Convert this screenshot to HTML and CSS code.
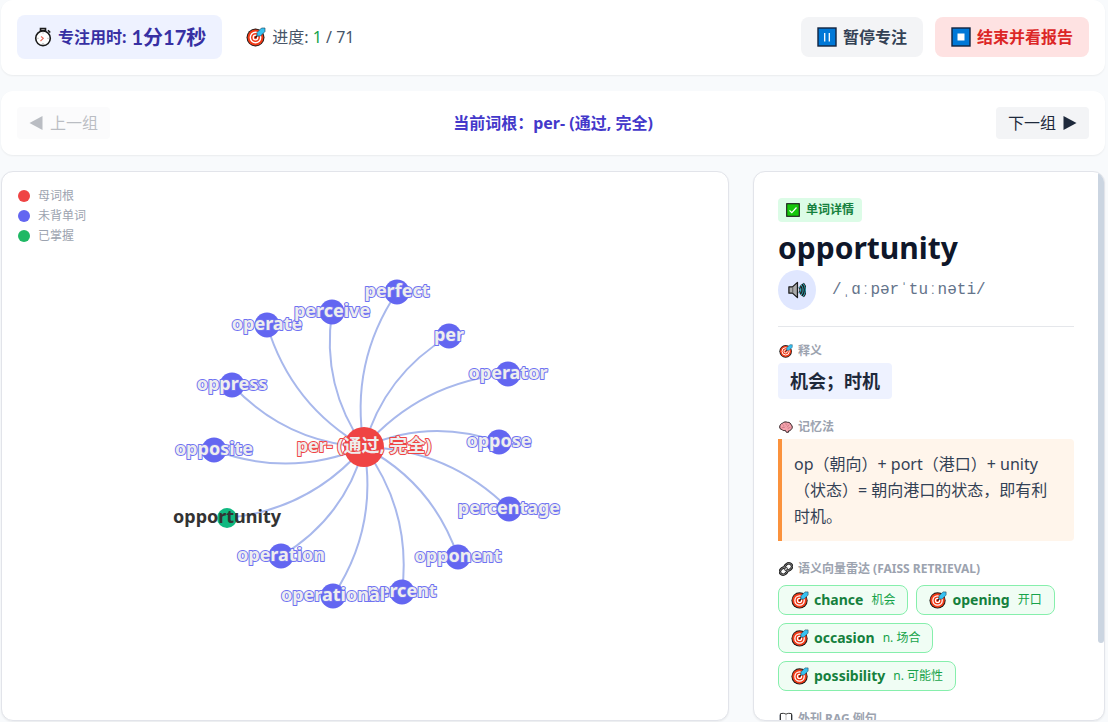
FILE: index.html
```html
<!DOCTYPE html>
<html lang="zh-CN">
<head>
    <meta charset="UTF-8">
    <meta name="viewport" content="width=device-width, initial-scale=1.0">
    <title>词根专注学习</title>
    <link rel="stylesheet" href="styles.css">
</head>
<body>
    <!-- 图标 -->
    <svg class="sprite" aria-hidden="true">
        <symbol id="icon-target" viewBox="0 0 20 20">
            <circle cx="9.5" cy="10.5" r="9" fill="#1b1b1b"/>
            <circle cx="9.5" cy="10.5" r="8" fill="#f03a17"/>
            <circle cx="9.5" cy="10.5" r="5.2" fill="none" stroke="#fff" stroke-width="1.4"/>
            <circle cx="9.5" cy="10.5" r="2.3" fill="none" stroke="#fff" stroke-width="1.3"/>
            <path d="M9.2 10.8 14 6" stroke="#1b1b1b" stroke-width="1.3"/>
            <path d="M11 9V5.500L15.500 1h3.500v3.500L14.500 9z" fill="#35c1f1" stroke="#1b3f55" stroke-width=".6"/>
        </symbol>
        <symbol id="icon-timer" viewBox="0 0 20 20">
            <path d="M7.5 1.5h5v2.3h-5zM15 3.3l2.2 2.2" fill="#bbb" stroke="#1b1b1b" stroke-width="1.6"/>
            <circle cx="10" cy="11.3" r="7.3" fill="#fff" stroke="#1b1b1b" stroke-width="1.6"/>
            <path d="M10 5.5v1M10 16v1M4.5 11.3h1M14.5 11.3h1" stroke="#999"/>
            <path d="m8 9.5 2.3 1.8L7.5 14" fill="none" stroke="#e86a5a" stroke-width="1.1"/>
        </symbol>
        <symbol id="icon-pause" viewBox="0 0 20 20">
            <rect x="1" y="1" width="18" height="18" fill="#0078d7" stroke="#12233f" stroke-width="1.4"/>
            <path d="M7.7 6v8.5M12.3 6v8.5" stroke="#fff" stroke-width="1.3"/>
        </symbol>
        <symbol id="icon-stop" viewBox="0 0 20 20">
            <rect x="1" y="1" width="18" height="18" fill="#0078d7" stroke="#12233f" stroke-width="1.4"/>
            <path d="M6.5 6.5h7v7h-7z" fill="#fff"/>
        </symbol>
        <symbol id="icon-check" viewBox="0 0 20 20">
            <rect x="1" y="1" width="18" height="18" fill="#16c60c" stroke="#1b1b1b" stroke-width="1.6"/>
            <path d="m5 10.5 3.3 3.3L15 6.5" fill="none" stroke="#fff" stroke-width="1.8"/>
        </symbol>
        <symbol id="icon-speaker" viewBox="0 0 20 20">
            <path d="M1 6.5h4l5.5-5v17L5 13.5H1z" fill="#aaa" stroke="#1b1b1b" stroke-width="1.4" stroke-linejoin="round"/>
            <path d="M5.3 7v6" stroke="#555"/>
            <path d="M12.600 6.500c1.800 2 1.800 5 0 7M14.500 4.300c3 3.500 3 8 0 11.400M16.600 2.700c3.600 4.500 3.600 10 0 14.600" fill="none" stroke="#1b1b1b" stroke-width="2.800"/>
            <path d="M12.600 6.500c1.800 2 1.800 5 0 7M14.500 4.300c3 3.500 3 8 0 11.400M16.600 2.700c3.600 4.500 3.600 10 0 14.600" fill="none" stroke="#2fc4d8" stroke-width="1"/>
        </symbol>
        <symbol id="icon-brain" viewBox="0 0 20 20">
            <path d="M1 10c0-3 2-5 4-5.500C7 2.500 10 2.300 12 3.300c3-.3 5 1.700 5.500 3.700 2 1.500 2 5 0 6.300-.5 1.500-2 2.200-3.500 2l-.5 2.200h-3L9 14.800C7 15.500 5 15 4 13.500 2 13.500 1 12 1 10z" fill="#f5a3ad" stroke="#2a1b1e" stroke-width="1.4"/>
            <path d="M5 6.500c1.500 0 2 1.500 1.500 2.500M10 4.500C9 6 10 7.500 12 7M4 11c2-.5 4 0 5-1.500M14.500 6.500c-.5 2-2.500 2-3 4M16.500 11c-2-.5-3.500.5-4 2" fill="none" stroke="#b0606c" stroke-width=".8"/>
        </symbol>
        <symbol id="icon-link" viewBox="0 0 20 20">
            <g transform="rotate(-42 10 10)" fill="none">
                <rect x="0" y="5.500" width="11" height="9" rx="4.500" stroke="#1b1b1b" stroke-width="3.600"/>
                <rect x="9" y="5.500" width="11" height="9" rx="4.500" stroke="#1b1b1b" stroke-width="3.600"/>
                <rect x="0" y="5.500" width="11" height="9" rx="4.500" stroke="#999"/>
                <rect x="9" y="5.500" width="11" height="9" rx="4.500" stroke="#999"/>
                <path d="M6 10h8" stroke="#ccc" stroke-width="1.500"/>
            </g>
        </symbol>
        <symbol id="icon-book" viewBox="0 0 20 20">
            <path d="M1 4h18v14h-7l-2 1-2-1H1z" fill="#27364f"/>
            <path d="M2 2.500C5 1.500 8 1.800 10 3.200c2-1.400 5-1.700 8-.7v13c-2.500-.8-6-.5-8 .8-2-1.300-5.500-1.600-8-.8z" fill="#fff" stroke="#1b1b1b" stroke-width="1.300"/>
            <path d="M10 3v13" stroke="#aaa"/>
        </symbol>
        <symbol id="icon-prev" viewBox="0 0 14 14"><path d="M13.500 0v14L.5 7z" fill="currentColor"/></symbol>
        <symbol id="icon-next" viewBox="0 0 14 14"><path d="M.5 0v14l13-7z" fill="currentColor"/></symbol>
    </svg>

    <div class="page">
        <header class="card topbar">
            <div class="stats">
                <div class="timer">
                    <svg class="icon-lg"><use href="#icon-timer"/></svg>
                    <span>专注用时:</span>
                    <span class="timer-value">1分17秒</span>
                </div>
                <div class="progress">
                    <svg class="icon-lg"><use href="#icon-target"/></svg>
                    <span>进度: <span class="progress-done">1</span> / 71</span>
                </div>
            </div>
            <div class="actions">
                <button type="button" class="btn btn-pause"><svg class="icon-lg"><use href="#icon-pause"/></svg>暂停专注</button>
                <button type="button" class="btn btn-stop"><svg class="icon-lg"><use href="#icon-stop"/></svg>结束并看报告</button>
            </div>
        </header>

        <nav class="card group-nav">
            <button type="button" class="nav-btn" disabled><svg class="arrow"><use href="#icon-prev"/></svg>上一组</button>
            <h2 class="group-title">当前词根：per- (通过, 完全)</h2>
            <button type="button" class="nav-btn">下一组<svg class="arrow"><use href="#icon-next"/></svg></button>
        </nav>

        <main class="content">
            <section class="card graph-card">
                <ul class="legend">
                    <li><span class="dot dot-root"></span>母词根</li>
                    <li><span class="dot dot-todo"></span>未背单词</li>
                    <li><span class="dot dot-done"></span>已掌握</li>
                </ul>
                <svg class="graph" id="graph" viewBox="0 0 726 548"></svg>
            </section>

            <aside class="card detail">
                <div class="detail-scroll">
                    <div class="word-head">
                        <span class="badge"><svg class="icon-sm"><use href="#icon-check"/></svg>单词详情</span>
                        <h1 class="word">opportunity</h1>
                        <div class="pron">
                            <button type="button" class="speak" aria-label="发音"><svg class="icon"><use href="#icon-speaker"/></svg></button>
                            <span class="phonetic">/ˌɑːpərˈtuːnəti/</span>
                        </div>
                    </div>

                    <section class="block">
                        <h3 class="label"><svg class="icon-sm"><use href="#icon-target"/></svg>释义</h3>
                        <p class="meaning">机会；时机</p>
                    </section>

                    <section class="block">
                        <h3 class="label"><svg class="icon-sm"><use href="#icon-brain"/></svg>记忆法</h3>
                        <p class="memory">op（朝向）+ port（港口）+ unity（状态）= 朝向港口的状态，即有利时机。</p>
                    </section>

                    <section class="block">
                        <h3 class="label label-wide"><svg class="icon-sm"><use href="#icon-link"/></svg>语义向量雷达 (FAISS RETRIEVAL)</h3>
                        <div class="chips">
                            <button type="button" class="chip"><svg class="icon"><use href="#icon-target"/></svg><b>chance</b><small>机会</small></button>
                            <button type="button" class="chip"><svg class="icon"><use href="#icon-target"/></svg><b>opening</b><small>开口</small></button>
                            <button type="button" class="chip"><svg class="icon"><use href="#icon-target"/></svg><b>occasion</b><small>n. 场合</small></button>
                            <button type="button" class="chip"><svg class="icon"><use href="#icon-target"/></svg><b>possibility</b><small>n. 可能性</small></button>
                        </div>
                    </section>

                    <section class="block examples">
                        <h3 class="label"><svg class="icon-sm"><use href="#icon-book"/></svg>外刊 RAG 例句</h3>
                    </section>
                </div>
                <div class="scrollbar"><div class="scrollbar-thumb"></div></div>
            </aside>
        </main>
    </div>

    <script src="graph.js"></script>
</body>
</html>
```
FILE: styles.css
```css
* {
    margin: 0;
    padding: 0;
    box-sizing: border-box;
}

body {
    font-family: 'Segoe UI', 'Noto Sans', 'Noto Sans CJK SC', sans-serif;
    font-size: 16px;
    line-height: 24px;
    color: #1e293b;
    background: #f8fafc;
}

button {
    font: inherit;
    border: none;
    cursor: pointer;
}

ul {
    list-style: none;
}

.sprite {
    display: none;
}

.page {
    display: flex;
    flex-direction: column;
    gap: 16px;
    height: 100vh;
    padding: 0 3px 1px 1px;
}

.card {
    background: #fff;
    border-radius: 12px;
    box-shadow: 0 1px 2px rgba(0, 0, 0, 0.06);
}

.icon-lg {
    width: 20px;
    height: 20px;
    flex-shrink: 0;
}

.icon {
    width: 18px;
    height: 18px;
    flex-shrink: 0;
}

.icon-sm {
    width: 14px;
    height: 14px;
    flex-shrink: 0;
}

/* 顶部栏 */
.topbar {
    display: flex;
    align-items: center;
    justify-content: space-between;
    padding: 15px 16px 16px;
}

.stats {
    display: flex;
    align-items: center;
    gap: 24px;
}

.timer {
    display: flex;
    align-items: center;
    gap: 5px;
    padding: 8px 16px;
    border-radius: 8px;
    background: #eef2ff;
    color: #3730a3;
    font-weight: 700;
    line-height: 28px;
}

.timer-value {
    font-family: Lato, 'Noto Sans CJK SC', sans-serif;
    font-size: 20px;
}

.progress {
    display: flex;
    align-items: center;
    gap: 6px;
    color: #475569;
}

.progress-done {
    color: #16a34a;
}

.actions {
    display: flex;
    gap: 12px;
}

.btn {
    display: flex;
    align-items: center;
    gap: 6px;
    padding: 8px 16px;
    border-radius: 8px;
    font-weight: 700;
}

.btn-pause {
    background: #f3f4f6;
    color: #334155;
}

.btn-stop {
    background: #fee2e2;
    color: #dc2626;
}

/* 词根切换 */
.group-nav {
    display: flex;
    align-items: center;
    justify-content: space-between;
    padding: 16px;
}

.nav-btn {
    display: flex;
    align-items: center;
    gap: 7px;
    padding: 4px 12px;
    border-radius: 4px;
    background: #f3f4f6;
    color: #1e293b;
}

.nav-btn:disabled {
    opacity: 0.3;
    cursor: not-allowed;
}

.arrow {
    width: 14px;
    height: 14px;
}

.group-title {
    font-size: 16px;
    font-weight: 700;
    color: #4338ca;
}

/* 主体 */
.content {
    flex: 1;
    min-height: 0;
    display: grid;
    grid-template-columns: minmax(0, 1fr) 352px;
    grid-template-rows: minmax(0, 1fr);
    gap: 24px;
}

.graph-card {
    position: relative;
    border: 1px solid #e2e4ea;
}

.legend {
    position: absolute;
    top: 14px;
    left: 16px;
    font-size: 12px;
    line-height: 20px;
    color: #9ca3af;
}

.legend li {
    display: flex;
    align-items: center;
    gap: 8px;
}

.dot {
    width: 12px;
    height: 12px;
    border-radius: 50%;
}

.dot-root {
    background: #ef4444;
}

.dot-todo {
    background: #6366f1;
}

.dot-done {
    background: #1fb864;
}

.graph {
    display: block;
    width: 100%;
    height: 100%;
}

.edge {
    fill: none;
    stroke: #a8b8ec;
    stroke-width: 2;
}

.node-root {
    fill: #ef4444;
}

.node-todo {
    fill: #6366f1;
}

.node-done {
    fill: #10b981;
}

.node-label {
    font-size: 18px;
    font-weight: 700;
    text-anchor: middle;
    dominant-baseline: central;
    fill: #eee;
    stroke-width: 2;
    stroke-linejoin: round;
    paint-order: stroke;
}

.label-root {
    stroke: #ef4444;
}

.label-todo {
    stroke: #6f72f2;
}

.label-done {
    fill: #333;
}

/* 单词详情 */
.detail {
    display: flex;
    border: 1px solid #e2e4ea;
    overflow: hidden;
}

.detail-scroll {
    flex: 1;
    min-width: 0;
    padding: 26px 24px 24px;
    overflow-y: auto;
    scrollbar-width: none;
}

.scrollbar {
    width: 6px;
}

.scrollbar-thumb {
    height: 86%;
    border-radius: 3px;
    background: #cbd5e1;
}

.word-head {
    display: flex;
    flex-direction: column;
    align-items: flex-start;
    padding-bottom: 16px;
    border-bottom: 1px solid #e5e7eb;
}

.badge {
    display: flex;
    align-items: center;
    gap: 6px;
    padding: 4px 8px;
    border-radius: 4px;
    background: #dcfce7;
    color: #15803d;
    font-size: 12px;
    font-weight: 700;
    line-height: 16px;
}

.word {
    margin: 8px 0 4px;
    font-size: 30px;
    line-height: 36px;
    color: #0f172a;
}

.pron {
    display: flex;
    align-items: center;
    gap: 16px;
}

.speak {
    display: flex;
    align-items: center;
    justify-content: center;
    width: 38px;
    height: 40px;
    border-radius: 50%;
    background: #e0e7ff;
}

.phonetic {
    font-family: Consolas, 'Liberation Mono', monospace;
    color: #64748b;
}

.block {
    margin-top: 20px;
}

.word-head + .block {
    margin-top: 16px;
}

.label {
    display: flex;
    align-items: center;
    gap: 5px;
    margin-bottom: 4px;
    padding-left: 1px;
    font-size: 12px;
    font-weight: 700;
    line-height: 16px;
    color: #9ca3af;
}

.label-wide {
    margin-bottom: 8px;
}

.meaning {
    display: inline-block;
    vertical-align: top;
    padding: 4px 12px;
    border-radius: 4px;
    background: #eef2ff;
    font-size: 18px;
    font-weight: 700;
    line-height: 28px;
}

.memory {
    padding: 12px;
    border-left: 4px solid #fb923c;
    border-radius: 0 4px 4px 0;
    background: #fff5eb;
    color: #334155;
    line-height: 26px;
}

.chips {
    display: flex;
    flex-wrap: wrap;
    gap: 8px;
}

.chip {
    display: flex;
    align-items: center;
    gap: 5px;
    padding: 4px 12px;
    border: 1px solid #86efac;
    border-radius: 8px;
    background: #f0fdf4;
    color: #15803d;
    font-size: 14px;
    line-height: 20px;
}

.chip small {
    margin-left: 3px;
    font-size: 12px;
    color: #16a34a;
}

.examples {
    padding-bottom: 52px;
}
```
FILE: graph.js
```js
const root = { name: 'per- (通过, 完全)', x: 362, y: 275, r: 20, type: 'root' };

const words = [
    { name: 'perfect', x: 395, y: 120 },
    { name: 'per', x: 447, y: 164 },
    { name: 'operator', x: 506, y: 202 },
    { name: 'oppose', x: 497, y: 270 },
    { name: 'percentage', x: 507, y: 337 },
    { name: 'opponent', x: 456, y: 385 },
    { name: 'percent', x: 400, y: 420 },
    { name: 'operational', x: 331, y: 424 },
    { name: 'operation', x: 279, y: 384 },
    { name: 'opportunity', x: 225, y: 346, r: 10, type: 'done' },
    { name: 'opposite', x: 212, y: 278 },
    { name: 'oppress', x: 230, y: 213 },
    { name: 'operate', x: 265, y: 153 },
    { name: 'perceive', x: 330, y: 140 }
];

const CURVENESS = 0.2;
const svg = document.getElementById('graph');

function add(tag, attrs, text) {
    const el = document.createElementNS('http://www.w3.org/2000/svg', tag);
    Object.keys(attrs).forEach((key) => el.setAttribute(key, attrs[key]));
    if (text) el.textContent = text;
    svg.appendChild(el);
}

function drawEdge(a, b) {
    const cx = (a.x + b.x) / 2 - (a.y - b.y) * CURVENESS;
    const cy = (a.y + b.y) / 2 - (b.x - a.x) * CURVENESS;
    add('path', { class: 'edge', d: `M${a.x} ${a.y}Q${cx} ${cy} ${b.x} ${b.y}` });
}

function drawNode(node) {
    const type = node.type || 'todo';
    add('circle', { class: `node-${type}`, cx: node.x, cy: node.y, r: node.r || 12.5 });
}

function drawLabel(node) {
    const type = node.type || 'todo';
    add('text', { class: `node-label label-${type}`, x: node.x, y: node.y - 2 }, node.name);
}

const nodes = [root, ...words];
words.forEach((word) => drawEdge(root, word));
nodes.forEach(drawNode);
nodes.forEach(drawLabel);
```
